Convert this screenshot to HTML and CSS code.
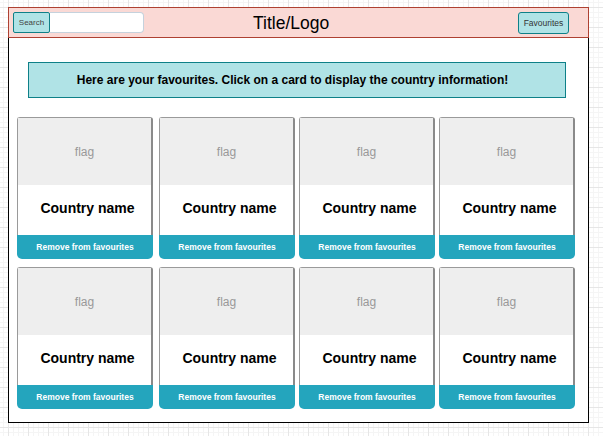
FILE: index.html
```html
<!DOCTYPE html>
<html lang="en">
<head>
<meta charset="utf-8">
<title>Favourites</title>
<link rel="stylesheet" href="styles.css">
</head>
<body>
<div class="frame">
  <header class="topbar">
    <div class="search">
      <button class="search-btn">Search</button>
      <input class="search-input" type="text" aria-label="Search">
    </div>
    <div class="title">Title/Logo</div>
    <button class="fav-btn">Favourites</button>
  </header>
  <main class="content">
    <div class="banner">Here are your favourites. Click on a card to display the country information!</div>
    <div class="cards">
      <div class="card"><div class="card-top"><div class="flag">flag</div><div class="name">Country name</div></div><div class="remove">Remove from favourites</div></div>
      <div class="card"><div class="card-top"><div class="flag">flag</div><div class="name">Country name</div></div><div class="remove">Remove from favourites</div></div>
      <div class="card"><div class="card-top"><div class="flag">flag</div><div class="name">Country name</div></div><div class="remove">Remove from favourites</div></div>
      <div class="card"><div class="card-top"><div class="flag">flag</div><div class="name">Country name</div></div><div class="remove">Remove from favourites</div></div>
      <div class="card"><div class="card-top"><div class="flag">flag</div><div class="name">Country name</div></div><div class="remove">Remove from favourites</div></div>
      <div class="card"><div class="card-top"><div class="flag">flag</div><div class="name">Country name</div></div><div class="remove">Remove from favourites</div></div>
      <div class="card"><div class="card-top"><div class="flag">flag</div><div class="name">Country name</div></div><div class="remove">Remove from favourites</div></div>
      <div class="card"><div class="card-top"><div class="flag">flag</div><div class="name">Country name</div></div><div class="remove">Remove from favourites</div></div>
    </div>
  </main>
</div>
</body>
</html>
```
FILE: styles.css
```css
html {
  background-color: #ffffff;
  background-image:
    linear-gradient(#e6e6e6 1px, transparent 1px),
    linear-gradient(90deg, #e6e6e6 1px, transparent 1px),
    linear-gradient(#f5f5f5 1px, transparent 1px),
    linear-gradient(90deg, #f5f5f5 1px, transparent 1px);
  background-size: 20px 20px, 20px 20px, 5px 5px, 5px 5px;
  background-position: 8px 7px, 8px 7px, 8px 7px, 8px 7px;
}

body {
  margin: 0;
  font-family: "Liberation Sans", Arial, sans-serif;
  color: #000;
}

.frame {
  margin: 7px 0 0 8px;
  width: 581px;
  box-sizing: border-box;
}

.topbar {
  box-sizing: border-box;
  height: 31px;
  background: #fad9d5;
  border: 1px solid #ae4132;
  display: flex;
  align-items: flex-start;
  padding: 4px 0 0 4px;
}

.search {
  display: flex;
  height: 21px;
}

.search-btn {
  box-sizing: border-box;
  width: 37px;
  height: 21px;
  margin: 0;
  padding: 0;
  background: #b0e3e6;
  border: 1px solid #0e8088;
  border-radius: 2px;
  font-family: "Liberation Sans", Arial, sans-serif;
  font-size: 8px;
  color: #444;
}

.search-input {
  box-sizing: border-box;
  width: 94px;
  height: 21px;
  margin: 0;
  padding: 0 4px;
  background: #fff;
  border: 1px solid #c5d2dd;
  border-left: none;
  border-radius: 0 4px 4px 0;
  outline: none;
}

.title {
  margin-left: 109px;
  font-size: 17.5px;
  line-height: 21px;
  margin-top: 1px;
  color: #000;
}

.fav-btn {
  box-sizing: border-box;
  margin: 0 19px 0 auto;
  padding: 0;
  width: 51px;
  height: 22px;
  background: #b0e3e6;
  border: 1px solid #0e8088;
  border-radius: 3px;
  font-family: "Liberation Sans", Arial, sans-serif;
  font-size: 8.5px;
  color: #333;
}

.content {
  box-sizing: border-box;
  height: 385px;
  background: #fff;
  border: 1px solid #000;
  border-top: none;
  padding: 24px 0 0 8px;
}

.banner {
  box-sizing: border-box;
  margin-left: 11px;
  width: 538px;
  height: 36px;
  padding-right: 9px;
  background: #b0e3e6;
  border: 1px solid #0e8088;
  display: flex;
  align-items: center;
  justify-content: center;
  font-weight: bold;
  font-size: 12px;
  color: #000;
}

.cards {
  margin-top: 19px;
  display: grid;
  grid-template-columns: 142px 140px 140px 136px;
  grid-auto-rows: 142px;
  row-gap: 8px;
}

.card {
  width: 136px;
  display: flex;
  flex-direction: column;
}

.card-top {
  box-sizing: border-box;
  flex: 1;
  border: 1px solid #9a9a9a;
  border-right: 2px solid #8a8a8a;
  border-bottom: none;
  border-radius: 3px 3px 0 0;
  display: flex;
  flex-direction: column;
}

.flag {
  height: 67px;
  background: #eeeeee;
  display: flex;
  align-items: center;
  justify-content: center;
  font-size: 12px;
  color: #999;
}

.name {
  flex: 1;
  background: #fff;
  display: flex;
  align-items: center;
  justify-content: center;
  font-weight: bold;
  font-size: 14px;
  padding: 0 0 5px 6px;
}

.remove {
  height: 24px;
  background: #24a5bd;
  border-radius: 0 0 5px 5px;
  display: flex;
  align-items: center;
  justify-content: center;
  font-weight: bold;
  font-size: 8.5px;
  color: #fff;
}
```
